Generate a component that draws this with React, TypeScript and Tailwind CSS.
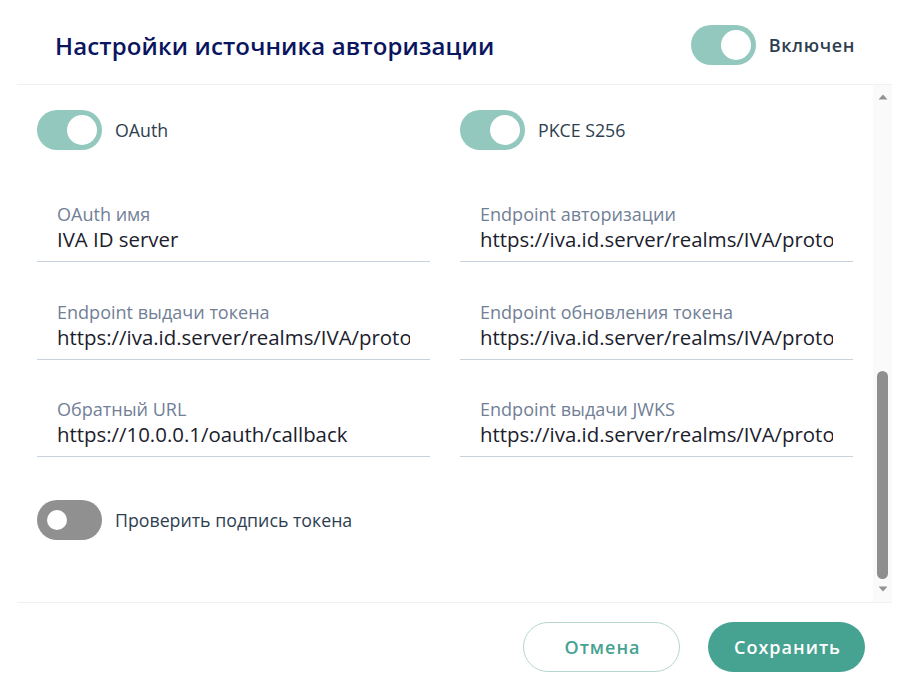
import React from "react";

function Toggle({ on }: { on: boolean }) {
  return on ? (
    <div className="flex h-10 w-[65px] shrink-0 items-center justify-end rounded-full bg-[#93c8be] pr-[5px]">
      <div className="h-[30px] w-[30px] rounded-full bg-white" />
    </div>
  ) : (
    <div className="flex h-10 w-[65px] shrink-0 items-center justify-start rounded-full bg-[#909090] pl-[10px]">
      <div className="h-[20px] w-[20px] rounded-full bg-white" />
    </div>
  );
}

function SwitchRow({ on, label }: { on: boolean; label: string }) {
  return (
    <div className="flex h-10 items-center gap-[13px]">
      <Toggle on={on} />
      <span className="text-[17.75px] text-[#2d3e50]">{label}</span>
    </div>
  );
}

function Field({ label, value }: { label: string; value: string }) {
  return (
    <div className="flex h-[72px] flex-col justify-end border-b border-[#c8d2de] px-5 pb-[8px]">
      <label className="h-[22px] text-[18.05px] leading-[22px] text-[#718096]">{label}</label>
      <input
        readOnly
        value={value}
        className="h-[28px] w-full bg-transparent text-[20.4px] leading-[28px] text-[#1a202c] outline-none"
        style={{ fontFamily: "inherit" }}
      />
    </div>
  );
}

const url = "https://iva.id.server/realms/IVA/protocol/openid-connect/token";

export default function App() {
  return (
    <div
      className="flex h-[695px] w-[915px] flex-col overflow-hidden bg-white pl-[17px] pr-[23px]"
      style={{ fontFamily: '"Open Sans", sans-serif' }}
    >
      <header className="flex h-[85px] shrink-0 items-center justify-between border-b border-[#f0f0f0] pl-[38px] pr-[37px] pt-[6px]">
        <h1 className="pt-[1px] text-[24px] font-semibold tracking-[0.13px] text-[#0a1560]">Настройки источника авторизации</h1>
        <div className="flex items-center gap-[13px]">
          <Toggle on />
          <span className="text-[18px] font-semibold tracking-[0.65px] text-[#2d3e50]">Включен</span>
        </div>
      </header>

      <div className="flex h-[517px] shrink-0">
        <div className="flex-1 pl-5 pr-5 pt-[25px]">
          <div className="grid grid-cols-[393px_393px] gap-x-[30px]">
            <SwitchRow on label="OAuth" />
            <SwitchRow on label="PKCE S256" />
          </div>
          <div className="mt-[40px] grid grid-cols-[393px_393px] gap-x-[30px] gap-y-[25.5px]">
            <Field label="OAuth имя" value="IVA ID server" />
            <Field label="Endpoint авторизации" value={url} />
            <Field label="Endpoint выдачи токена" value={url} />
            <Field label="Endpoint обновления токена" value={url} />
            <Field label="Обратный URL" value="https://10.0.0.1/oauth/callback" />
            <Field label="Endpoint выдачи JWKS" value={url} />
          </div>
          <div className="mt-[43px]">
            <SwitchRow on={false} label="Проверить подпись токена" />
          </div>
        </div>

        <div className="flex w-[19px] shrink-0 flex-col items-center bg-[#fafafa]">
          <svg width="10" height="6" viewBox="0 0 10 6" className="mt-[9px] shrink-0">
            <path d="M5 0.5 L9.5 5.5 H0.5 Z" fill="#929292" />
          </svg>
          <div className="mt-[271px] h-[208px] w-[11px] rounded-[5.5px] bg-[#8f8f8f]" />
          <svg width="10" height="6" viewBox="0 0 10 6" className="mt-[7px] shrink-0">
            <path d="M0.5 0.5 H9.5 L5 5.5 Z" fill="#929292" />
          </svg>
        </div>
      </div>

      <footer className="flex flex-1 items-start justify-end gap-7 border-t border-[#f0f0f0] pr-[27px] pt-[19px]">
        <button className="h-[50px] w-[157px] rounded-full border border-[#b5d6d0] bg-white pl-[2px] text-[18px] font-semibold tracking-[1px] text-[#46a291]">
          Отмена
        </button>
        <button className="h-[50px] w-[157px] rounded-full bg-[#46a291] pl-[2px] text-[18px] font-semibold tracking-[1px] text-white">
          Сохранить
        </button>
      </footer>
    </div>
  );
}
